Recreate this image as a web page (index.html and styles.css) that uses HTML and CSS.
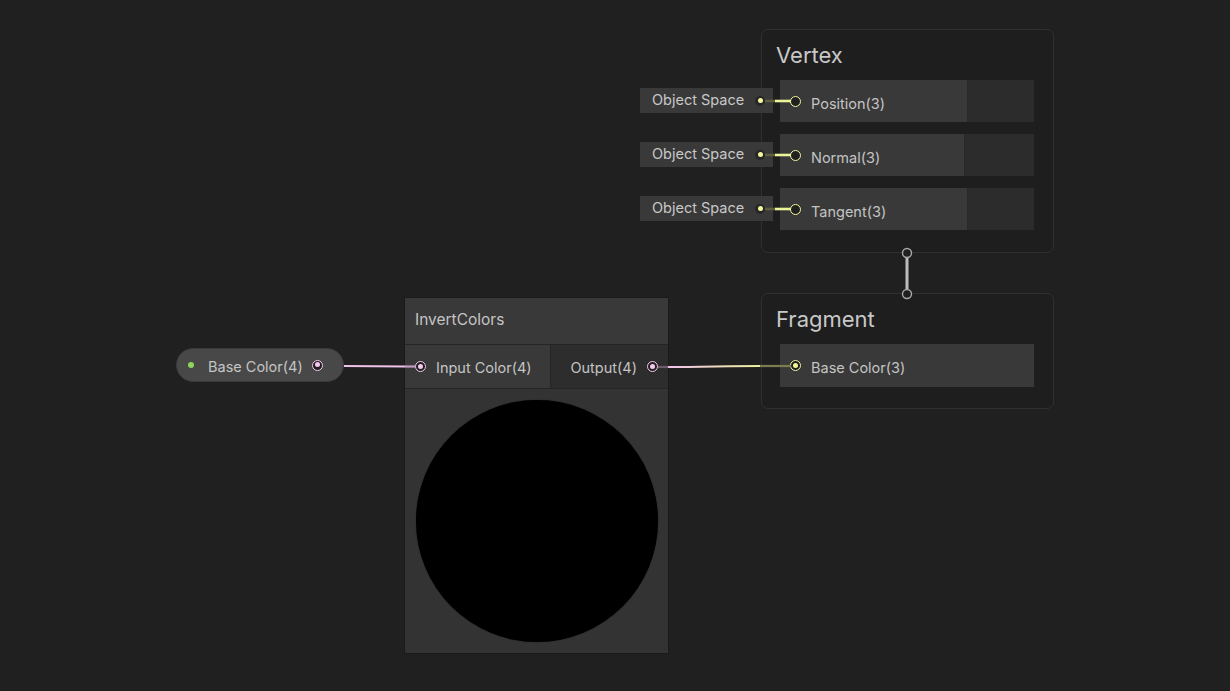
FILE: index.html
```html
<!DOCTYPE html>
<html>
<head>
<meta charset="utf-8">
<link rel="stylesheet" href="styles.css">
</head>
<body>
<div class="graph">

  <div class="context vertex">
    <div class="ctx-title">Vertex</div>
    <div class="slots">
      <div class="slot"><div class="slot-main w187"><span class="port yellow"></span><span class="slot-label">Position(3)</span></div><div class="slot-side"></div></div>
      <div class="slot"><div class="slot-main w184"><span class="port yellow"></span><span class="slot-label">Normal(3)</span></div><div class="slot-side"></div></div>
      <div class="slot"><div class="slot-main w187"><span class="port yellow"></span><span class="slot-label">Tangent(3)</span></div><div class="slot-side"></div></div>
    </div>
  </div>

  <div class="context fragment">
    <div class="ctx-title">Fragment</div>
    <div class="slots">
      <div class="slot tall"><div class="slot-main full"><span class="port yellow on"></span><span class="slot-label">Base Color(3)</span></div></div>
    </div>
  </div>

  <div class="space-field f1"><span class="space-text">Object Space</span><span class="out-dot"></span></div>
  <div class="space-field f2"><span class="space-text">Object Space</span><span class="out-dot"></span></div>
  <div class="space-field f3"><span class="space-text">Object Space</span><span class="out-dot"></span></div>

  <div class="prop-pill">
    <span class="exposed-dot"></span>
    <span class="pill-label">Base Color(4)</span>
    <span class="port pink on"></span>
  </div>

  <div class="node invert">
    <div class="node-header">InvertColors</div>
    <div class="node-ports">
      <div class="in-cell"><span class="port pink on"></span><span class="slot-label">Input Color(4)</span></div>
      <div class="out-cell"><span class="slot-label">Output(4)</span><span class="port pink on"></span></div>
    </div>
    <div class="preview"><div class="preview-ball"></div></div>
  </div>

  <svg class="wires" width="1230" height="691" viewBox="0 0 1230 691">
    <defs>
      <linearGradient id="pg" x1="668" y1="0" x2="760" y2="0" gradientUnits="userSpaceOnUse">
        <stop offset="0" stop-color="#efc2ea"/>
        <stop offset="1" stop-color="#ecf09c"/>
      </linearGradient>
    </defs>
    <g stroke-width="2.6" stroke-linecap="butt">
      <line x1="765" y1="101" x2="775" y2="101" stroke="#5d5e40"/>
      <line x1="775" y1="101" x2="791" y2="101" stroke="#eef49a"/>
      <line x1="765" y1="155" x2="775" y2="155" stroke="#5d5e40"/>
      <line x1="775" y1="155" x2="791" y2="155" stroke="#eef49a"/>
      <line x1="765" y1="209" x2="775" y2="209" stroke="#5d5e40"/>
      <line x1="775" y1="209" x2="791" y2="209" stroke="#eef49a"/>
    </g>
    <g stroke-width="2.2">
      <line x1="344" y1="366" x2="405" y2="366.5" stroke="#efc2ea"/>
      <line x1="405" y1="366.5" x2="415" y2="366.5" stroke="#c79fc3"/>
      <line x1="658" y1="367" x2="668" y2="367" stroke="#6e5c6c"/>
      <path d="M668 367 C 700 367, 730 366, 760 366" fill="none" stroke="url(#pg)"/>
      <line x1="760" y1="366" x2="791" y2="366" stroke="#7b7c50"/>
    </g>
    <line x1="907" y1="258" x2="907" y2="289" stroke="#bcbcbc" stroke-width="3"/>
    <circle cx="907" cy="253" r="4.5" fill="#202020" stroke="#a9a9a9" stroke-width="1.4"/>
    <circle cx="907" cy="294" r="4.5" fill="#202020" stroke="#a9a9a9" stroke-width="1.4"/>
  </svg>
</div>
</body>
</html>
```
FILE: styles.css
```css
html, body {
  margin: 0;
  padding: 0;
  background: #202020;
}
body {
  font-family: Inter, "Noto Sans", sans-serif;
  color: #c4c4c4;
}
.graph {
  position: relative;
  width: 1230px;
  height: 691px;
  overflow: hidden;
  background: #202020;
}

/* Context blocks */
.context {
  position: absolute;
  left: 761px;
  width: 293px;
  box-sizing: border-box;
  border: 1px solid #303030;
  border-radius: 7px;
  background: #1e1e1e;
  padding: 12px 18px 0 14px;
}
.vertex { top: 29px; height: 224px; }
.fragment { top: 293px; height: 116px; }
.ctx-title {
  font-size: 22px;
  line-height: 26px;
  color: #c8c8c8;
  margin-bottom: 12px;
}
.slots {
  display: flex;
  flex-direction: column;
  gap: 12px;
  margin-left: 4px;
  width: 254px;
}
.slot {
  display: flex;
  height: 42px;
}
.slot.tall { height: 43px; }
.slot-main {
  display: flex;
  align-items: center;
  box-sizing: border-box;
  padding-left: 10px;
  background: #393939;
}
.w187 { width: 187px; }
.w184 { width: 184px; }
.full { width: 100%; }
.slot-side {
  flex: 1;
  background: #2c2c2c;
  border-left: 1px solid #292929;
}
.slot-label {
  font-size: 14.5px;
  color: #c4c4c4;
  margin-left: 10px;
  padding-top: 4px;
  white-space: nowrap;
}

/* Ports */
.port {
  position: relative;
  flex: none;
  width: 11px;
  height: 11px;
  box-sizing: border-box;
  border-radius: 50%;
  background: #202020;
  border: 1.5px solid #f4f89c;
}
.port.pink { border-color: #f6c8ee; }
.port.on::after {
  content: "";
  position: absolute;
  left: 1.5px;
  top: 1.5px;
  width: 5px;
  height: 5px;
  border-radius: 50%;
  background: #f4f89c;
}
.port.pink.on::after { background: #f6c8ee; }

/* Object Space fields */
.space-field {
  position: absolute;
  left: 640px;
  width: 133px;
  height: 25px;
  box-sizing: border-box;
  display: flex;
  align-items: center;
  padding: 0 8px 0 12px;
  background: #393939;
}
.f1 { top: 88px; }
.f2 { top: 142px; }
.f3 { top: 196px; }
.space-text {
  font-size: 14.5px;
  color: #c8c8c8;
  white-space: nowrap;
  margin-top: -2px;
}
.out-dot {
  position: relative;
  margin-left: auto;
  width: 10px;
  height: 10px;
  border-radius: 50%;
  background: #262626;
}
.out-dot::after {
  content: "";
  position: absolute;
  left: 2.5px;
  top: 2.5px;
  width: 5px;
  height: 5px;
  border-radius: 50%;
  background: #f4f89c;
}

/* Property pill */
.prop-pill {
  position: absolute;
  left: 176px;
  top: 348px;
  width: 168px;
  height: 34px;
  box-sizing: border-box;
  border: 1px solid #3a3a3a;
  border-radius: 17px;
  background: #484848;
  display: flex;
  align-items: center;
  padding: 0 20px 0 11px;
}
.exposed-dot {
  width: 6px;
  height: 6px;
  border-radius: 50%;
  background: #8fd45c;
  flex: none;
}
.pill-label {
  font-size: 14.5px;
  color: #c4c4c4;
  margin-left: 14px;
  padding-top: 3px;
  white-space: nowrap;
}
.prop-pill .port { margin-left: auto; }

/* Invert node */
.node {
  position: absolute;
  box-sizing: border-box;
  border: 1px solid #1a1a1a;
  background: #2e2e2e;
  display: flex;
  flex-direction: column;
}
.invert {
  left: 404px;
  top: 297px;
  width: 265px;
  height: 357px;
}
.node-header {
  height: 47px;
  box-sizing: border-box;
  border-bottom: 1px solid #252525;
  background: #393939;
  display: flex;
  align-items: center;
  padding: 0 0 3px 10px;
  font-size: 15.5px;
  color: #c4c4c4;
}
.node-ports {
  display: flex;
  height: 43px;
  border-bottom: 1px solid #252525;
}
.node-ports .slot-label { padding-top: 1px; }
.in-cell {
  width: 146px;
  box-sizing: border-box;
  display: flex;
  align-items: center;
  padding-left: 10px;
  background: #393939;
  border-right: 1px solid #262626;
}
.out-cell {
  flex: 1;
  display: flex;
  align-items: center;
  justify-content: flex-end;
  padding-right: 10px;
  background: #2d2d2d;
}
.out-cell .slot-label { margin-left: 0; margin-right: 10px; }
.preview {
  flex: 1;
  background: #333333;
  display: flex;
  align-items: center;
  justify-content: center;
}
.preview-ball {
  width: 242px;
  height: 242px;
  border-radius: 50%;
  background: #000;
  box-shadow: 0 0 1px 0 #111;
}

/* Wires overlay */
.wires {
  position: absolute;
  left: 0;
  top: 0;
  pointer-events: none;
}
```
